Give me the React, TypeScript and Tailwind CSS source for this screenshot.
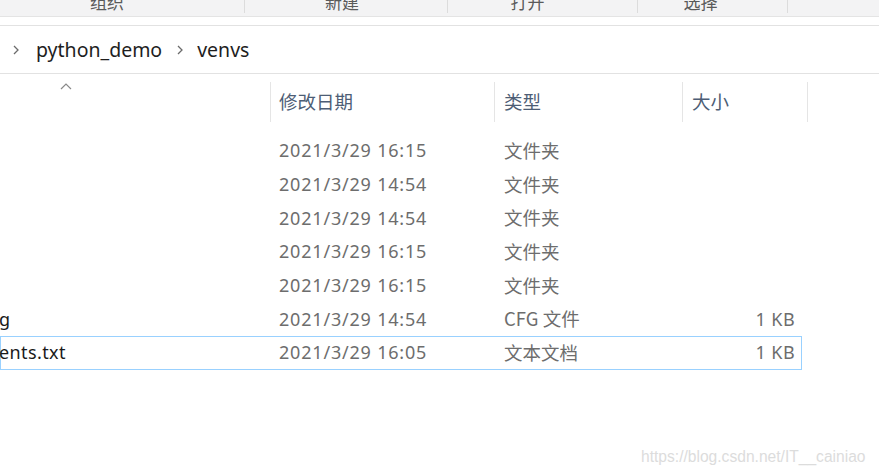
import React from "react";

const cjk = { fontFamily: '"Noto Sans CJK SC", "Noto Sans", sans-serif' };
const lat = { fontFamily: '"Noto Sans", "Noto Sans CJK SC", sans-serif' };

const rows = [
  { name: "", date: "2021/3/29 16:15", type: "文件夹", size: "" },
  { name: "", date: "2021/3/29 14:54", type: "文件夹", size: "" },
  { name: "", date: "2021/3/29 14:54", type: "文件夹", size: "" },
  { name: "", date: "2021/3/29 16:15", type: "文件夹", size: "" },
  { name: "", date: "2021/3/29 16:15", type: "文件夹", size: "" },
  { name: "g", date: "2021/3/29 14:54", type: "CFG 文件", size: "1 KB" },
  { name: "ents.txt", date: "2021/3/29 16:05", type: "文本文档", size: "1 KB", selected: true },
];

function Chevron() {
  return (
    <svg width="8" height="12" viewBox="0 0 8 12" className="shrink-0">
      <path d="M2 2 L6 6 L2 10" fill="none" stroke="#6b6b6b" strokeWidth="1.3" />
    </svg>
  );
}

export default function App() {
  return (
    <div className="w-[879px] h-[472px] bg-white overflow-hidden relative" style={cjk}>
      {/* toolbar */}
      <div className="h-[16px] bg-[#f3f3f4] flex overflow-hidden">
        <div className="w-[245px] border-r border-[#dcdcdc] h-[13px] flex justify-center">
          <span className="text-[17px] leading-[20px] -mt-[8px] ml-[-30px] text-[#5a5a5a]">组织</span>
        </div>
        <div className="w-[203px] border-r border-[#dcdcdc] h-[13px] flex justify-center">
          <span className="text-[17px] leading-[20px] -mt-[8px] ml-[-8px] text-[#5a5a5a]">新建</span>
        </div>
        <div className="w-[190px] border-r border-[#dcdcdc] h-[13px] flex justify-center">
          <span className="text-[17px] leading-[20px] -mt-[8px] ml-[-30px] text-[#5a5a5a]">打开</span>
        </div>
        <div className="w-[150px] border-r border-[#dcdcdc] h-[13px] flex justify-center">
          <span className="text-[17px] leading-[20px] -mt-[8px] ml-[-24px] text-[#5a5a5a]">选择</span>
        </div>
      </div>
      <div className="h-[1px] bg-[#e4e4e4]" />
      <div className="h-[8px] bg-white" />
      <div className="h-[1px] bg-[#e2e2e2]" />
      {/* address bar */}
      <div className="h-[47px] flex items-center pl-[12px]">
        <Chevron />
        <span className="ml-[16px] text-[19.5px] text-[#1e1e1e]" style={lat}>python_demo</span>
        <span className="ml-[14px]"><Chevron /></span>
        <span className="ml-[13px] text-[19.5px] text-[#1e1e1e]" style={lat}>venvs</span>
      </div>
      <div className="h-[1px] bg-[#e2e2e2]" />
      {/* header */}
      <div className="h-[48px] flex relative">
        <div className="w-[270px] relative">
          <svg width="12" height="8" viewBox="0 0 12 8" className="absolute left-[60px] top-[9px]">
            <path d="M1 6 L6 1 L11 6" fill="none" stroke="#8a8a8a" strokeWidth="1.2" />
          </svg>
        </div>
        <div className="w-[224px] border-l border-[#e5e5e5] mt-[8px] pl-[8px] flex items-center text-[18.5px] text-[#4d5d75]">修改日期</div>
        <div className="w-[188px] border-l border-[#e5e5e5] mt-[8px] pl-[9px] flex items-center text-[18.5px] text-[#4d5d75]">类型</div>
        <div className="w-[125px] border-l border-[#e5e5e5] mt-[8px] pl-[9px] flex items-center text-[18.5px] text-[#4d5d75]">大小</div>
        <div className="border-l border-[#e5e5e5] mt-[8px]" />
      </div>
      {/* rows */}
      <div className="mt-[12px] w-[802px]">
        {rows.map((r, i) => (
          <div
            key={i}
            className={
              "h-[33.67px] flex items-center border " +
              (r.selected ? "border-[#99d1ff]" : "border-transparent")
            }
          >
            <div className="w-[269px] text-[18px] tracking-[0.4px] text-[#1a1a1a] -ml-[2px]" style={lat}>{r.name}</div>
            <div className="w-[224px] pl-[11px] text-[18px] tracking-[0.8px] text-[#6d6d6d]" style={lat}>{r.date}</div>
            <div className="w-[182px] pl-[12px] text-[18.5px] text-[#6d6d6d]" style={cjk}>{r.type}</div>
            <div className="w-[121px] text-right text-[18px] tracking-[0.4px] text-[#6d6d6d]" style={lat}>{r.size}</div>
          </div>
        ))}
      </div>
      <div
        className="absolute left-[641px] top-[445px] text-[15.6px] text-[#dcdcdc]"
        style={{ fontFamily: '"Liberation Sans", Arial, sans-serif' }}
      >
        https://blog.csdn.net/IT__cainiao
      </div>
    </div>
  );
}
